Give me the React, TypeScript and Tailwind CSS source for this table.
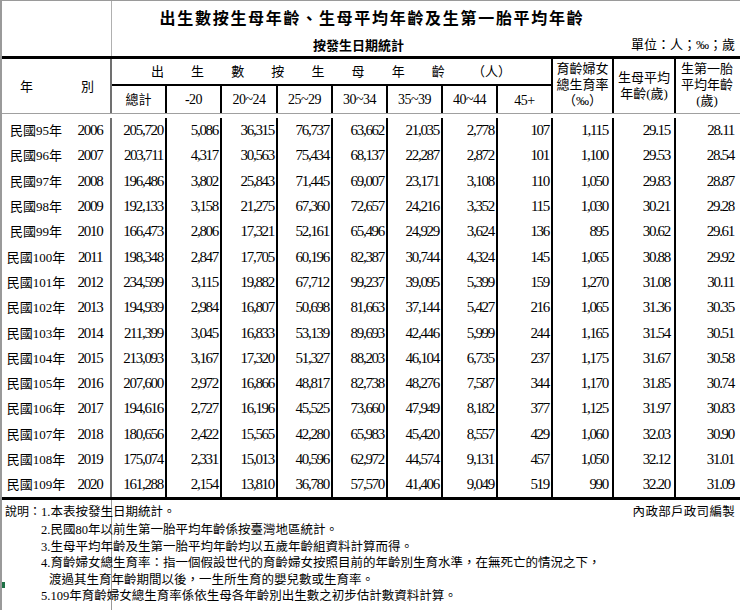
import React from "react";

const COLS =
  "grid grid-cols-[110px_55px_55px_56px_55px_55px_55px_55px_55px_61px_62px_62px]";

const rows: string[][] = [
  ["民國95年", "2006", "205,720", "5,086", "36,315", "76,737", "63,662", "21,035", "2,778", "107", "1,115", "29.15", "28.11"],
  ["民國96年", "2007", "203,711", "4,317", "30,563", "75,434", "68,137", "22,287", "2,872", "101", "1,100", "29.53", "28.54"],
  ["民國97年", "2008", "196,486", "3,802", "25,843", "71,445", "69,007", "23,171", "3,108", "110", "1,050", "29.83", "28.87"],
  ["民國98年", "2009", "192,133", "3,158", "21,275", "67,360", "72,657", "24,216", "3,352", "115", "1,030", "30.21", "29.28"],
  ["民國99年", "2010", "166,473", "2,806", "17,321", "52,161", "65,496", "24,929", "3,624", "136", "895", "30.62", "29.61"],
  ["民國100年", "2011", "198,348", "2,847", "17,705", "60,196", "82,387", "30,744", "4,324", "145", "1,065", "30.88", "29.92"],
  ["民國101年", "2012", "234,599", "3,115", "19,882", "67,712", "99,237", "39,095", "5,399", "159", "1,270", "31.08", "30.11"],
  ["民國102年", "2013", "194,939", "2,984", "16,807", "50,698", "81,663", "37,144", "5,427", "216", "1,065", "31.36", "30.35"],
  ["民國103年", "2014", "211,399", "3,045", "16,833", "53,139", "89,693", "42,446", "5,999", "244", "1,165", "31.54", "30.51"],
  ["民國104年", "2015", "213,093", "3,167", "17,320", "51,327", "88,203", "46,104", "6,735", "237", "1,175", "31.67", "30.58"],
  ["民國105年", "2016", "207,600", "2,972", "16,866", "48,817", "82,738", "48,276", "7,587", "344", "1,170", "31.85", "30.74"],
  ["民國106年", "2017", "194,616", "2,727", "16,196", "45,525", "73,660", "47,949", "8,182", "377", "1,125", "31.97", "30.83"],
  ["民國107年", "2018", "180,656", "2,422", "15,565", "42,280", "65,983", "45,420", "8,557", "429", "1,060", "32.03", "30.90"],
  ["民國108年", "2019", "175,074", "2,331", "15,013", "40,596", "62,972", "44,574", "9,131", "457", "1,050", "32.12", "31.01"],
  ["民國109年", "2020", "161,288", "2,154", "13,810", "36,780", "57,570", "41,406", "9,049", "519", "990", "32.20", "31.09"],
];

const ageHeads = ["總計", "-20", "20~24", "25~29", "30~34", "35~39", "40~44", "45+"];
const spread = ["出", "生", "數", "按", "生", "母", "年", "齡", "（人）"];

export default function App() {
  return (
    <div className="relative w-[740px] h-[610px] overflow-hidden bg-white text-black border-l-2 border-t border-[#9a9a9a] font-['Liberation_Serif','Noto_Sans_CJK_TC',serif]">
      {/* title area */}
      <div className="h-[58px] border-b-[3px] border-black bg-[linear-gradient(to_right,transparent_109px,#b0b0b0_109px,#b0b0b0_110px,transparent_110px)] flex flex-col">
        <div className="h-[32px] flex items-center justify-center pl-[2px]">
          <span className="font-['Noto_Sans_CJK_TC',sans-serif] font-bold text-[16px] tracking-[1.7px] leading-none">
            出生數按生母年齡、生母平均年齡及生第一胎平均年齡
          </span>
        </div>
        <div className="flex-1 flex items-center pl-[311px] pr-[5px]">
          <span className="font-['Noto_Sans_CJK_TC',sans-serif] font-bold text-[13px] leading-none">
            按發生日期統計
          </span>
          <span className="ml-auto text-[13px] leading-none">單位：人；‰；歲</span>
        </div>
      </div>

      {/* header */}
      <div className={`${COLS} grid-rows-[27px_27px] border-b border-[#a0a0a0] text-[13px] leading-none`}>
        <div className="row-span-2 border-r-2 border-[#707070] flex items-center justify-between pl-[18px] pr-[16px]">
          <span>年</span>
          <span>別</span>
        </div>
        <div className="col-span-8 border-r-2 border-b-2 border-black flex items-center justify-between pl-[39px] pr-[40px]">
          {spread.map((c, i) => (
            <span key={i}>{c}</span>
          ))}
        </div>
        <div className="row-span-2 border-r-2 border-black flex flex-col items-center justify-center pb-[3px] leading-[16px]">
          <span>育齡婦女</span>
          <span>總生育率</span>
          <span>（‰）</span>
        </div>
        <div className="row-span-2 border-r-2 border-black flex flex-col items-center justify-center leading-[16px]">
          <span>生母平均</span>
          <span>年齡(歲)</span>
        </div>
        <div className="row-span-2 flex flex-col items-center justify-center pb-[3px] leading-[16px]">
          <span>生第一胎</span>
          <span>平均年齡</span>
          <span>(歲)</span>
        </div>
        {ageHeads.map((h, i) => (
          <div
            key={h}
            className={`border-r-2 border-black flex items-center justify-center ${
              i === 0 ? "text-[13px]" : "text-[14px] tracking-[-0.5px]"
            } ${i === 7 ? "pt-[3px]" : ""}`}
          >
            {h}
          </div>
        ))}
      </div>

      {/* data */}
      <div className="pt-[4px] border-b-[3px] border-black">
        {rows.map((r) => (
          <div key={r[1]} className={`${COLS} h-[25.3px]`}>
            <div className="border-r-2 border-[#707070] flex items-center">
              <span className="w-[68px] text-center text-[13px] leading-none whitespace-nowrap">{r[0]}</span>
              <span className="flex-1 text-center text-[15px] tracking-[-1.3px] leading-none">{r[1]}</span>
            </div>
            {r.slice(2).map((v, i) => (
              <div
                key={i}
                className={`flex items-center justify-end text-[15px] tracking-[-1.3px] leading-none ${
                  i < 10 ? "border-r-2 border-black" : ""
                } ${i >= 8 ? "pr-[4px]" : "pr-[2px]"}`}
              >
                {v}
              </div>
            ))}
          </div>
        ))}
      </div>

      {/* footer notes */}
      <div className="pt-[3px] bg-[linear-gradient(to_right,transparent_109px,#9a9a9a_109px,#9a9a9a_110px,transparent_110px)] h-[120px] text-[12.5px]">
        <div className="flex items-center h-[17px] mb-[2px] pr-[5px] whitespace-nowrap">
          <span className="pl-[3px] text-[12px]">說明：</span>
          <span>1.本表按發生日期統計。</span>
          <span className="ml-auto tracking-[0.3px]">內政部戶政司編製</span>
        </div>
        <div className="pl-[39px] leading-[16.5px] whitespace-nowrap">
          <div>2.民國80年以前生第一胎平均年齡係按臺灣地區統計。</div>
          <div>3.生母平均年齡及生第一胎平均年齡均以五歲年齡組資料計算而得。</div>
          <div>4.育齡婦女總生育率：指一個假設世代的育齡婦女按照目前的年齡別生育水準，在無死亡的情況之下，</div>
          <div className="pl-[8px]">渡過其生育年齡期間以後，一生所生育的嬰兒數或生育率。</div>
          <div>5.109年育齡婦女總生育率係依生母各年齡別出生數之初步估計數資料計算。</div>
        </div>
      </div>

      <div className="absolute left-0 top-[581px] w-[3px] h-[6px] bg-[#1d7044]" />
    </div>
  );
}
